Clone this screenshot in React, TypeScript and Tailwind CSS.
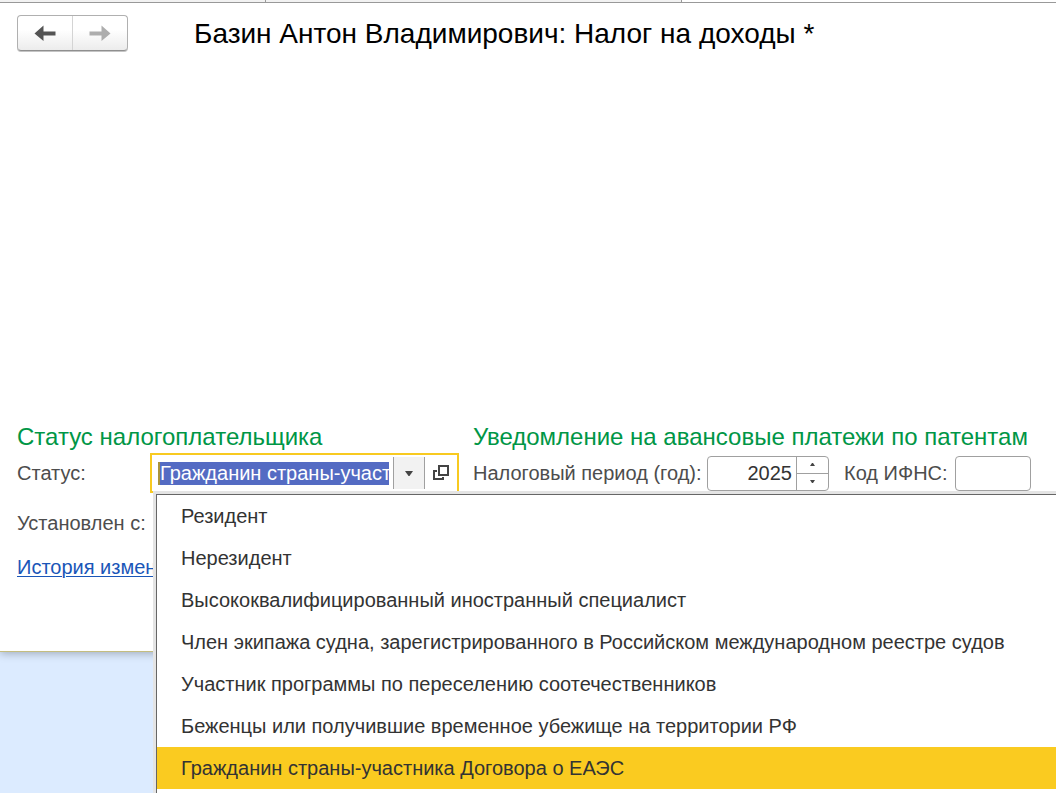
import React, { useState } from 'react';

const STATUSES = [
  'Резидент',
  'Нерезидент',
  'Высококвалифицированный иностранный специалист',
  'Член экипажа судна, зарегистрированного в Российском международном реестре судов',
  'Участник программы по переселению соотечественников',
  'Беженцы или получившие временное убежище на территории РФ',
  'Гражданин страны-участника Договора о ЕАЭС',
];

function ArrowIcon({ className }: { className: string }) {
  return (
    <svg viewBox="0 0 22 16" className={className} fill="currentColor" aria-hidden="true">
      <path d="M0.5 8.5 L9.5 0.5 V6.5 H21.5 V10.5 H9.5 V16 Z" />
    </svg>
  );
}

function NavButtons() {
  return (
    <div className="flex h-9 w-[111px] overflow-hidden rounded border border-[#b0b0b0] border-b-[#8f8f8f] bg-linear-to-b from-white from-40% to-[#ececec] shadow-[0_1px_0_#c4c4c4]">
      <button aria-label="Назад" className="flex flex-1 items-center justify-center border-r border-[#d4d4d4]">
        <ArrowIcon className="h-4 w-[22px] text-[#545454]" />
      </button>
      <button aria-label="Вперед" className="flex flex-1 items-center justify-center">
        <ArrowIcon className="h-4 w-[22px] -scale-x-100 text-[#adadad]" />
      </button>
    </div>
  );
}

interface StatusFieldProps {
  value: string;
  onChange: (value: string) => void;
}

function StatusField({ value, onChange }: StatusFieldProps) {
  const [open, setOpen] = useState(true);

  return (
    <div className="relative w-[309px]">
      <div className="flex h-10 items-center border-2 border-[#f8ca20] bg-white pl-1.5">
        <input
          id="status"
          value={value}
          onChange={(e) => onChange(e.target.value)}
          className="mr-1 h-[23px] min-w-0 flex-1 border-l-2 border-[#ab943c] bg-[#546bc3] text-xl leading-6 text-white outline-none"
        />
        <button
          aria-label="Выбрать из списка"
          onClick={() => setOpen(!open)}
          className="flex h-8 w-8 items-center justify-center border-x border-[#a0a0a0] bg-[#f2f2f2]"
        >
          <svg viewBox="0 0 8 5" className="h-[5px] w-2" fill="#444" aria-hidden="true">
            <path d="M0 0 H8 L4.5 5 H3.5 Z" />
          </svg>
        </button>
        <button aria-label="Открыть" className="flex h-8 w-8 items-center justify-center">
          <svg viewBox="0 0 16 16" className="h-4 w-4" fill="none" stroke="#444" strokeWidth="2" aria-hidden="true">
            <path d="M6 1 H15 V10 H6 Z" />
            <path d="M4 6 H1 V14 H10 V12" />
          </svg>
        </button>
      </div>

      {open && (
        <ul
          role="listbox"
          aria-label="Статус"
          className="absolute top-[41px] left-1.5 z-10 w-[1000px] border border-[#666] bg-white pb-1 shadow-[0_0_0_3px_#e4e4e4]"
        >
          {STATUSES.map((status) => (
            <li key={status} role="option" aria-selected={status === value}>
              <button
                onClick={() => onChange(status)}
                className={
                  status === value
                    ? 'block h-[42px] w-full bg-[#facb20] pl-6 text-left'
                    : 'block h-[42px] w-full bg-white pl-6 text-left'
                }
              >
                {status}
              </button>
            </li>
          ))}
        </ul>
      )}
    </div>
  );
}

function YearField() {
  const [year, setYear] = useState(2025);

  return (
    <div className="flex h-[35px] w-[122px] rounded border border-[#a0a0a0] bg-white">
      <input
        id="year"
        value={year}
        onChange={(e) => setYear(Number(e.target.value) || 0)}
        className="min-w-0 flex-1 pr-1 text-right outline-none"
      />
      <div className="flex w-8 flex-col border-l border-[#a0a0a0]">
        <button
          aria-label="Увеличить"
          onClick={() => setYear(year + 1)}
          className="flex flex-1 items-center justify-center border-b border-[#a0a0a0]"
        >
          <svg viewBox="0 0 5 3" className="h-[3px] w-[5px]" fill="#444" aria-hidden="true">
            <path d="M0 3 H5 L3 0 H2 Z" />
          </svg>
        </button>
        <button
          aria-label="Уменьшить"
          onClick={() => setYear(year - 1)}
          className="flex flex-1 items-center justify-center"
        >
          <svg viewBox="0 0 5 3" className="h-[3px] w-[5px]" fill="#444" aria-hidden="true">
            <path d="M0 0 H5 L3 3 H2 Z" />
          </svg>
        </button>
      </div>
    </div>
  );
}

export default function App() {
  const [status, setStatus] = useState(STATUSES[6]);

  return (
    <div className="h-screen overflow-hidden bg-[#dcebff] font-['Liberation_Sans',Arial,sans-serif] text-xl text-[#333]">
      <div className="border-b border-[#c4bd80] bg-white pb-[70px] shadow-[0_2px_8px_rgba(0,0,0,0.25)]">
        {/* Bottom edge of the window tabs */}
        <div className="flex h-[3px] border-b border-[#999]">
          <div className="w-[266px] border-r border-[#999] bg-[#f2f2f2]" />
          <div className="w-[416px] border-r border-[#999] bg-[#f2f2f2]" />
        </div>

        <header className="flex items-start gap-[66px] px-[17px] pt-3">
          <NavButtons />
          <h1 className="text-[28px] leading-[38px] whitespace-nowrap text-black">
            Базин Антон Владимирович: Налог на доходы *
          </h1>
        </header>

        <main className="mt-[370px] flex gap-[14px] px-[17px] text-[#4d4d4d]">
          <section className="shrink-0">
            <h2 className="text-2xl leading-7 text-[#009646]">Статус налогоплательщика</h2>
            <div className="mt-0.5 flex items-center">
              <label htmlFor="status" className="w-[133px]">
                Статус:
              </label>
              <div className="text-[#333]">
                <StatusField value={status} onChange={setStatus} />
              </div>
            </div>
            <p className="mt-4">Установлен с:</p>
            <a
              href="#history"
              className="mt-4 block w-[136px] overflow-hidden whitespace-nowrap text-[#1a56b8] underline decoration-1 underline-offset-2"
            >
              История измен
            </a>
          </section>

          <section className="shrink-0">
            <h2 className="text-2xl leading-7 text-[#009646]">Уведомление на авансовые платежи по патентам</h2>
            <div className="mt-0.5 flex h-10 items-center">
              <label htmlFor="year" className="w-[234px]">
                Налоговый период (год):
              </label>
              <div className="text-[#333]">
                <YearField />
              </div>
              <label htmlFor="ifns" className="ml-[15px] w-[111px]">
                Код ИФНС:
              </label>
              <input id="ifns" className="h-[35px] w-[76px] rounded border border-[#a0a0a0] bg-white px-2 outline-none" />
            </div>
          </section>
        </main>
      </div>
    </div>
  );
}
